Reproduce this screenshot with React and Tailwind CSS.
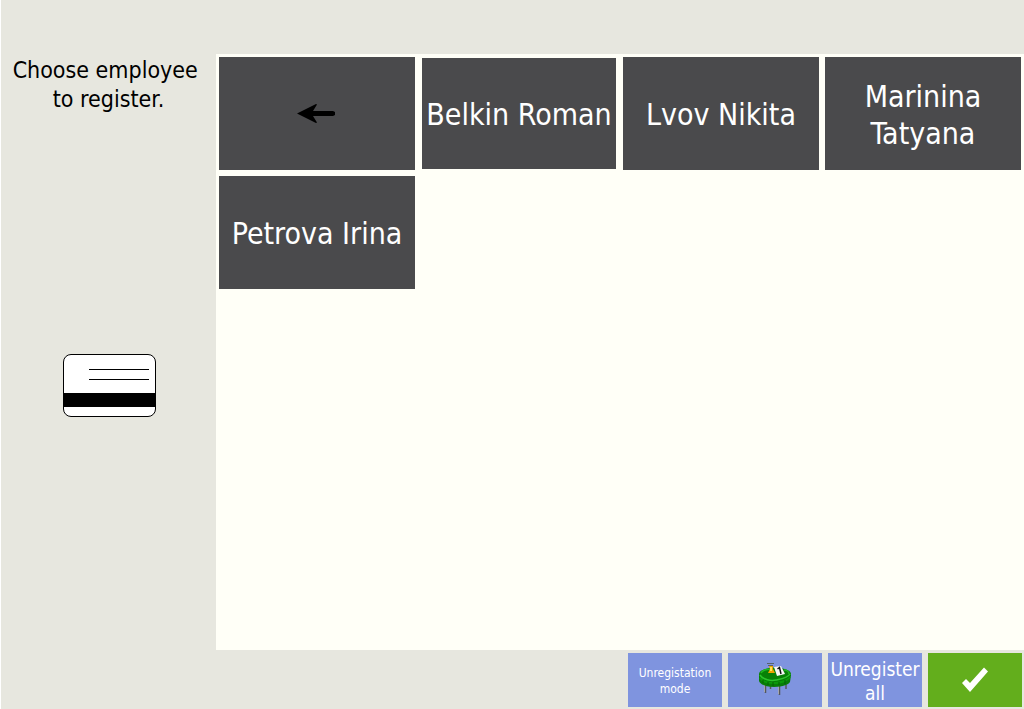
const employees = ["Belkin Roman", "Lvov Nikita", "Marinina Tatyana", "Petrova Irina"];

function BackArrow() {
  return (
    <svg width="40" height="20" viewBox="0 0 40 20" aria-hidden="true">
      <path d="M0 9.5 19 0 20 0.5 16 7H36L38 8V11L36 12H16L20 18.5 19 19Z" fill="#000" />
    </svg>
  );
}

function MagneticCard() {
  return (
    <svg width="93" height="63" viewBox="0 0 93 63" role="img" aria-label="Magnetic card">
      <rect x="0.5" y="0.5" width="92" height="62" rx="7.5" fill="#fff" stroke="#000" />
      <path d="M26 15.5H86M26 25.5H86" stroke="#000" />
      <rect y="39" width="93" height="14" />
    </svg>
  );
}

function TableIcon() {
  return (
    <svg width="34" height="34" viewBox="0 0 34 34" aria-hidden="true">
      <path d="M7.5 20V30M21.5 22V32M28 18V26M12.5 22V26" stroke="#55575c" strokeWidth="1.5" />
      <path d="M6.5 20V29M20.5 22V31" stroke="#a4a6b0" />
      <path d="M1 11V18C2 21 7 24 16 24S31 21 32 19L33 12Z" fill="#087c08" />
      <path d="M2 15C6 20 12 20 17 20S29 18 32 14" fill="none" stroke="#0a9a0a" strokeWidth="2" />
      <path d="M5 17V20M10 19V22M15 19V23M21 19V22M27 17V21" stroke="#056005" />
      <ellipse cx="17" cy="11" rx="16" ry="6.5" fill="#078007" />
      <path d="M2 12C5 17 13 18 18 17S30 15 32 11" fill="none" stroke="#2cc42c" strokeWidth="1.5" />
      <path d="M3 10C5 6 11 6 15 6M26 7C29 7 31 9 31 11" fill="none" stroke="#20b820" strokeWidth="1.5" />
      <path d="M11 3H15V6L17 10H10L12 6Z" fill="#eba400" />
      <path d="M12 4H14V8H12Z" fill="#ffe45a" />
      <path d="M9 0.5H16M10 2.5H15" stroke="#56636c" />
      <path d="M16 4 23 3 27 11 19 13Z" fill="#f7f7f7" />
      <path d="M19.5 6 21.5 4.5 23 11" fill="none" stroke="#111" strokeWidth="1.5" />
    </svg>
  );
}

function CheckIcon() {
  return (
    <svg width="28" height="26" viewBox="0 0 28 26" aria-hidden="true">
      <path d="M1 16 5 12 9 16 23 0.5 27 4.5 9 25Z" fill="#fff" />
    </svg>
  );
}

const footerButton = "flex h-[54px] w-[94px] items-center justify-center text-center text-white";

export default function App() {
  return (
    <div className="flex min-h-screen flex-col border-l border-white bg-[#e7e7df] pt-[54px] font-['DejaVu_Sans_Condensed','DejaVu_Sans',sans-serif] text-black">
      <div className="flex flex-1">
        <aside className="flex w-[215px] shrink-0 flex-col items-center pt-0.5">
          <h1 className="w-full text-center text-[23px] leading-[29px] font-normal">
            Choose employee&nbsp;<br />to register.
          </h1>
          <div className="mt-60 pl-0.5">
            <MagneticCard />
          </div>
        </aside>
        <main className="grid flex-1 auto-rows-[113px] grid-cols-4 content-start gap-1.5 bg-[#fffff7] p-[3px]">
          <button type="button" aria-label="Back" className="flex items-center justify-center bg-[#4a4a4c]">
            <BackArrow />
          </button>
          {employees.map((name, index) => (
            <button
              key={name}
              type="button"
              className={`min-w-0 bg-[#4a4a4c] pt-0.5 text-center text-[30px] leading-[37px] text-white ${index === 0 ? "border border-[#fffff7]" : ""}`}
            >
              {name}
            </button>
          ))}
        </main>
      </div>
      <footer className="flex justify-end gap-1.5 pt-[3px] pr-0.5 pb-0.5">
        <button type="button" className={`${footerButton} bg-[#7f94df] pt-0.5 text-xs leading-4`}>
          Unregistation<br />mode
        </button>
        <button type="button" aria-label="Tables" className={`${footerButton} bg-[#7f94df]`}>
          <TableIcon />
        </button>
        <button type="button" className={`${footerButton} bg-[#7f94df] pt-0.5 text-[19px] leading-6`}>
          Unregister<br />all
        </button>
        <button type="button" aria-label="Confirm" className={`${footerButton} bg-[#63ae1c]`}>
          <CheckIcon />
        </button>
      </footer>
    </div>
  );
}
